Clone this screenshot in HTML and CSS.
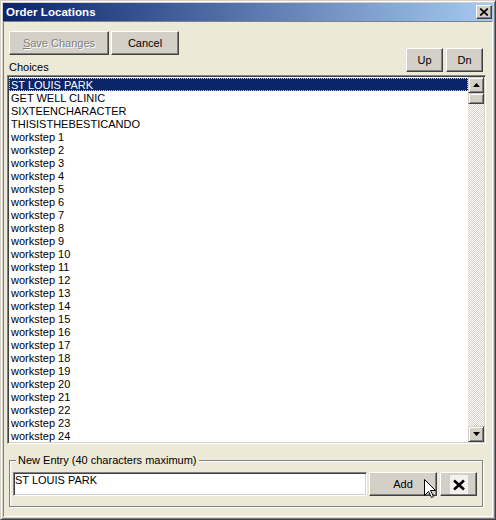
FILE: index.html
```html
<!DOCTYPE html>
<html lang="en">
<head>
<meta charset="utf-8">
<title>Order Locations</title>
<link rel="stylesheet" href="styles.css">
</head>
<body>
<div class="window">
  <div class="titlebar">
    <span class="title">Order Locations</span>
    <button class="close" aria-label="Close">
      <svg width="10" height="8" viewBox="0 0 10 8"><path d="M1.2 0.5 L8.8 7.5 M8.8 0.5 L1.2 7.5" stroke="#000" stroke-width="1.7" fill="none"/></svg>
    </button>
  </div>
  <div class="client">
    <div class="top">
      <div class="top-left">
        <div class="actions">
          <button class="btn btn-save" disabled><u>S</u>ave Changes</button>
          <button class="btn btn-cancel">Cancel</button>
        </div>
        <div class="choices-label">Choices</div>
      </div>
      <div class="order-buttons">
        <button class="btn btn-small">Up</button>
        <button class="btn btn-small">Dn</button>
      </div>
    </div>
    <div class="listbox">
      <ul class="items">
        <li class="selected">ST LOUIS PARK</li>
        <li>GET WELL CLINIC</li>
        <li>SIXTEENCHARACTER</li>
        <li>THISISTHEBESTICANDO</li>
        <li>workstep 1</li>
        <li>workstep 2</li>
        <li>workstep 3</li>
        <li>workstep 4</li>
        <li>workstep 5</li>
        <li>workstep 6</li>
        <li>workstep 7</li>
        <li>workstep 8</li>
        <li>workstep 9</li>
        <li>workstep 10</li>
        <li>workstep 11</li>
        <li>workstep 12</li>
        <li>workstep 13</li>
        <li>workstep 14</li>
        <li>workstep 15</li>
        <li>workstep 16</li>
        <li>workstep 17</li>
        <li>workstep 18</li>
        <li>workstep 19</li>
        <li>workstep 20</li>
        <li>workstep 21</li>
        <li>workstep 22</li>
        <li>workstep 23</li>
        <li>workstep 24</li>
      </ul>
      <div class="scrollbar">
        <div class="sb-btn"><svg width="7" height="4" viewBox="0 0 7 4"><path d="M3.5 0 L7 4 L0 4 Z" fill="#000"/></svg></div>
        <div class="sb-thumb"></div>
        <div class="sb-track"></div>
        <div class="sb-btn"><svg width="7" height="4" viewBox="0 0 7 4"><path d="M0 0 L7 0 L3.5 4 Z" fill="#000"/></svg></div>
      </div>
    </div>
    <fieldset class="entry">
      <legend>New Entry (40 characters maximum)</legend>
      <div class="entry-row">
        <textarea class="entry-input" rows="1">ST LOUIS PARK</textarea>
        <button class="btn btn-add">Add</button>
        <button class="btn btn-x" aria-label="Clear">
          <svg width="18" height="19" viewBox="0 0 18 19"><rect width="18" height="19" fill="#f3f2ee"/><path d="M4 5.5 L14 14.5 M14 5.5 L4 14.5" stroke="#000" stroke-width="2.6" fill="none"/></svg>
        </button>
      </div>
    </fieldset>
  </div>
  <svg class="cursor" width="13" height="20" viewBox="0 0 13 20"><path d="M0.5 0.5 L0.5 16.5 L4.5 12.5 L7.5 18.5 L9.5 17.5 L6.5 11.5 L11.5 11.5 Z" fill="#fff" stroke="#000" stroke-width="1"/></svg>
</div>
</body>
</html>
```

FILE: styles.css
```css
html, body {
  margin: 0;
  padding: 0;
  background: #ffffff;
}

body {
  font: 11px/13px "Liberation Sans", Arial, sans-serif;
  color: #000;
}

.window {
  position: relative;
  box-sizing: border-box;
  width: 496px;
  height: 520px;
  padding: 2px;
  display: flex;
  flex-direction: column;
  background: #d4d0c8;
  border: 1px solid;
  border-color: #d4d0c8 #404040 #404040 #d4d0c8;
  box-shadow: inset 1px 1px #ffffff, inset -1px -1px #808080;
}

.titlebar {
  height: 18px;
  flex: none;
  display: flex;
  align-items: flex-start;
  justify-content: space-between;
  background: linear-gradient(to right, #0a246a, #a6caf0);
}

.title {
  padding-left: 3px;
  font: bold 11.5px/18px "Liberation Sans", Arial, sans-serif;
  letter-spacing: 0.05px;
  color: #ffffff;
  white-space: nowrap;
}

.close {
  box-sizing: border-box;
  width: 16px;
  height: 14px;
  margin: 2px 1px 0 0;
  padding: 0;
  display: flex;
  align-items: center;
  justify-content: center;
  background: #d4d0c8;
  border: 1px solid;
  border-color: #ffffff #404040 #404040 #ffffff;
  box-shadow: inset -1px -1px #808080;
}

.client {
  flex: 1;
  box-sizing: border-box;
  display: flex;
  flex-direction: column;
  padding: 9px 6px 8px 3px;
  background: #ece9d8;
  border: 1px solid;
  border-color: #808080 #ffffff #ffffff #808080;
}

.top {
  display: flex;
  justify-content: space-between;
  align-items: flex-end;
  margin: 0 3px 0 2px;
}

.top-left {
  display: flex;
  flex-direction: column;
}

.actions {
  display: flex;
  gap: 2px;
}

.choices-label {
  margin-top: 6px;
  height: 13px;
  line-height: 13px;
}

.order-buttons {
  display: flex;
  gap: 3px;
  margin-bottom: 2px;
}

.btn {
  box-sizing: border-box;
  height: 24px;
  padding: 0;
  margin: 0;
  font: 11px/13px "Liberation Sans", Arial, sans-serif;
  color: #000;
  background: #d4d0c8;
  border: 1px solid;
  border-color: #ffffff #404040 #404040 #ffffff;
  box-shadow: inset -1px -1px #808080;
  display: flex;
  align-items: center;
  justify-content: center;
}

.btn-save {
  width: 100px;
  color: #808080;
  text-shadow: 1px 1px #ffffff;
}

.btn-cancel {
  width: 68px;
}

.btn-small {
  width: 37px;
}

.listbox {
  margin-top: 1px;
  height: 369px;
  box-sizing: border-box;
  flex: none;
  display: flex;
  padding: 1px;
  background: #ffffff;
  border: 1px solid;
  border-color: #808080 #ffffff #ffffff #808080;
  box-shadow: inset 1px 1px #404040, inset -1px -1px #d4d0c8;
}

.items {
  flex: 1;
  margin: 0;
  padding: 1px 0 0 0;
  list-style: none;
  overflow: hidden;
  background: #ffffff;
}

.items li {
  box-sizing: border-box;
  height: 13px;
  padding: 1px 0 0 2px;
  line-height: 12px;
  white-space: nowrap;
}

.items li.selected {
  background: #0a246a;
  color: #ffffff;
  outline: 1px dotted #e2d27c;
  outline-offset: -1px;
}

.scrollbar {
  width: 16px;
  flex: none;
  display: flex;
  flex-direction: column;
}

.sb-btn,
.sb-thumb {
  box-sizing: border-box;
  background: #d4d0c8;
  border: 1px solid;
  border-color: #d4d0c8 #404040 #404040 #d4d0c8;
  box-shadow: inset 1px 1px #ffffff, inset -1px -1px #808080;
}

.sb-btn {
  height: 16px;
  display: flex;
  align-items: center;
  justify-content: center;
}

.sb-thumb {
  height: 11px;
}

.sb-track {
  flex: 1;
  background: repeating-conic-gradient(#d4d0c8 0% 25%, #ffffff 0% 50%) 0 0 / 2px 2px;
}

.entry {
  margin: 10px 3px 0 2px;
  padding: 5px 5px 10px 3px;
  border: 1px solid #808080;
  box-shadow: inset 1px 1px #ffffff, 1px 1px #ffffff;
  min-width: 0;
}

.entry legend {
  margin-left: 3px;
  padding: 0 2px;
  height: 13px;
  line-height: 13px;
  background: #ece9d8;
}

.entry-row {
  display: flex;
  align-items: flex-start;
}

.entry-input {
  box-sizing: border-box;
  width: 354px;
  height: 24px;
  margin: 0 2px 0 0;
  padding: 1px;
  resize: none;
  overflow: hidden;
  font: 11px/13px "Liberation Sans", Arial, sans-serif;
  color: #000;
  background: #ffffff;
  border: 1px solid;
  border-color: #808080 #ffffff #ffffff #808080;
  box-shadow: inset 1px 1px #404040, inset -1px -1px #d4d0c8;
  outline: none;
}

.btn-add {
  width: 68px;
  margin-right: 3px;
}

.btn-x {
  width: 37px;
}

.cursor {
  position: absolute;
  left: 423px;
  top: 478px;
}
```
